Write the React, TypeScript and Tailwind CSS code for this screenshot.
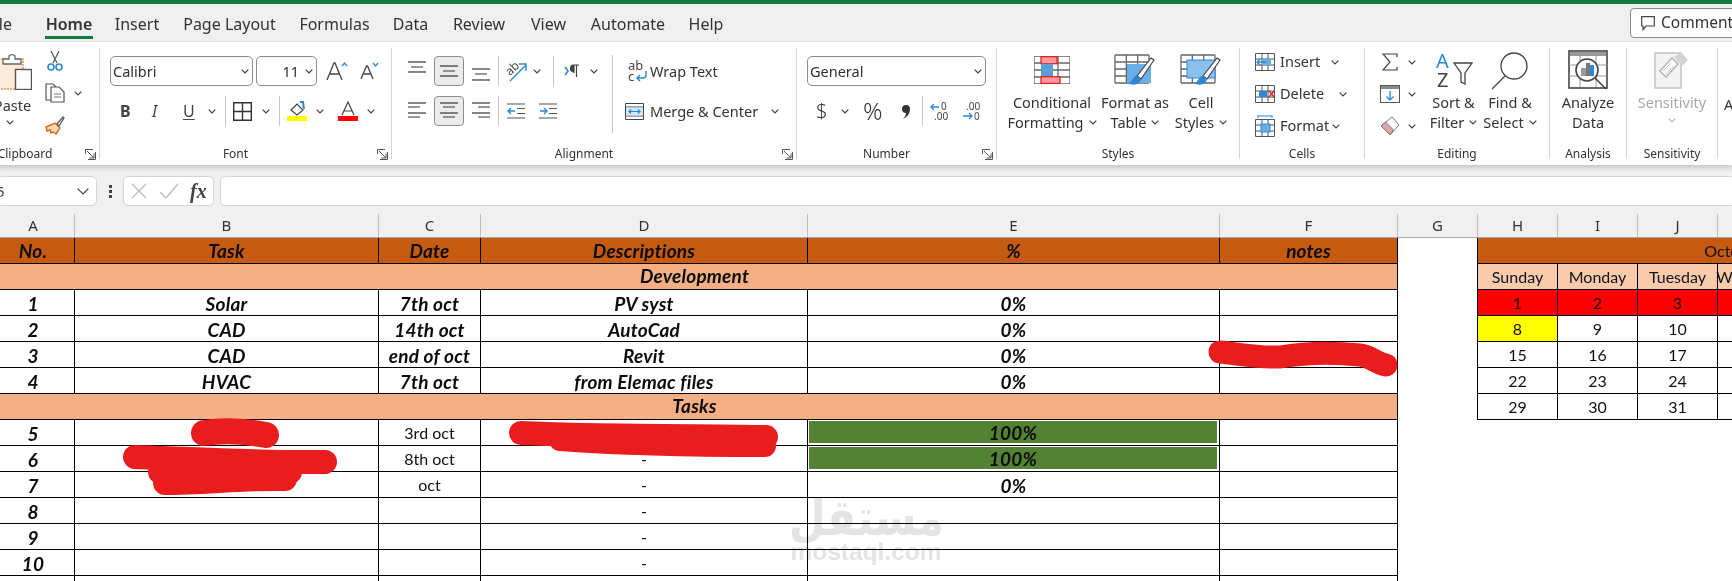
import type { ReactNode } from "react";

const ui = "font-['Noto_Sans',sans-serif]";
const cal = "font-['Lato','Liberation_Sans',sans-serif]";

function Chev({ className = "", gray = false }: { className?: string; gray?: boolean }) {
    return (
        <svg viewBox="0 0 8 5" className={"w-2 h-[5px] shrink-0 " + className}>
            <path d="M.7.7 4 4 7.3.7" fill="none" stroke={gray ? "#b5b5b5" : "#404040"} strokeWidth="1.2" />
        </svg>
    );
}

function Launcher() {
    return (
        <svg viewBox="0 0 11 11" className="w-[11px] h-[11px] shrink-0 ml-[6px] mr-[3px]">
            <path d="M.5 5V.5H8M2 2l7 7M9 4.5V9H4.5M10.5 3v7.5H3" fill="none" stroke="#555" strokeWidth="1" />
        </svg>
    );
}

function Sep({ className = "" }: { className?: string }) {
    return <div className={"w-px h-[30px] bg-[#c8c8c8] shrink-0 " + className} />;
}

function Group({ w, label, launcher, children, labelClass = "" }: { w: string; label: string; launcher?: boolean; children: ReactNode; labelClass?: string }) {
    return (
        <div className={"flex flex-col shrink-0 h-[111px] border-r border-[#d4d4d4] " + w}>
            <div className="flex-1 min-h-0">{children}</div>
            <div className="h-[14px] -mb-[2px] flex items-center">
                <span className={"flex-1 text-center text-[12px] leading-[14px] text-[#333] " + labelClass}>{label}</span>
                {launcher && <Launcher />}
            </div>
        </div>
    );
}

function Lines({ ys, spans }: { ys: number[]; spans: [number, number][] }) {
    return (
        <svg viewBox="0 0 18 30" className="w-[18px] h-[30px] shrink-0">
            {ys.map((y, i) => (
                <path key={i} d={`M${spans[i][0]} ${y}H${spans[i][1]}`} stroke={i % 2 ? "#555" : "#333"} strokeWidth="1.2" />
            ))}
        </svg>
    );
}

const full: [number, number][] = [[0, 18], [3, 15], [0, 18]];
const leftL: [number, number][] = [[0, 18], [0, 12], [0, 18], [0, 12]];
const centerL: [number, number][] = [[0, 18], [3, 15], [0, 18], [3, 15]];
const rightL: [number, number][] = [[0, 18], [6, 18], [0, 18], [6, 18]];

function PressedBtn({ children, className = "" }: { children: ReactNode; className?: string }) {
    return (
        <div className={"w-[30px] h-[30px] shrink-0 rounded-[4px] border border-[#8f8f8f] bg-[#ebebeb] flex items-center justify-center " + className}>
            {children}
        </div>
    );
}

function Combo({ w, text, right }: { w: string; text: string; right?: boolean }) {
    return (
        <div className={"h-[30px] rounded-[5px] border border-[#8a8a8a] flex items-center shrink-0 text-[14.5px] text-[#2f2f2f] " + w}>
            <span className={"flex-1 pt-px " + (right ? "text-right pr-[6px]" : "pl-[2px]")}>{text}</span>
            <Chev className="mr-[3px]" />
        </div>
    );
}

function Clipboard() {
    return (
        <Group w="w-[123px]" label="Clipboard" launcher labelClass="pr-[6px]">
            <div className="flex">
                <div className="ml-[11px] w-[44px] flex flex-col items-center pt-[4px] shrink-0">
                    <svg viewBox="0 0 44 38" className="w-[44px] h-[38px]">
                        <rect x="1" y="7" width="34" height="30" fill="#fdeadb" stroke="#e59a4f" strokeWidth="1.5" strokeDasharray="2 1" />
                        <path d="M21 7V4a4 4 0 0 1 6 0v3h6v5H15V7z" fill="#fff" stroke="#666" strokeWidth="1.3" />
                        <rect x="27.5" y="17.5" width="16" height="20" fill="#fff" stroke="#555" strokeWidth="1.4" />
                    </svg>
                    <span className="mt-[5px] ml-[5px] text-[14.5px] leading-[20px] text-[#333]">Paste</span>
                    <Chev className="mt-[5px]" />
                </div>
                <div className="ml-[13px] pt-[3px] flex flex-col gap-[12px]">
                    <svg viewBox="0 0 20 20" className="w-5 h-5">
                        <path d="M6 0l6 12M14 0 8 12" stroke="#555" strokeWidth="1.2" fill="none" />
                        <circle cx="6" cy="16" r="3" fill="none" stroke="#2b88d8" strokeWidth="1.6" />
                        <circle cx="14" cy="16" r="3" fill="none" stroke="#2b88d8" strokeWidth="1.6" />
                    </svg>
                    <div className="flex items-center">
                        <svg viewBox="0 0 20 20" className="w-5 h-5">
                            <path d="M6 17H1V1h7l3 3" fill="#fff" stroke="#555" strokeWidth="1.2" />
                            <path d="M6 4h8l5 5v10H6z" fill="#fff" stroke="#555" strokeWidth="1.2" />
                            <path d="M9 11h7M9 14h7" stroke="#777" strokeWidth="1" />
                        </svg>
                        <Chev className="ml-[9px]" />
                    </div>
                    <svg viewBox="0 0 20 20" className="w-5 h-5">
                        <path d="M1 12 10 8l5 5-4 6-3-2-2 1-1-3-3 1z" fill="#fbd5b5" stroke="#d9691e" strokeWidth="1.4" />
                        <path d="m12 9 6-7 1 1-5 8z" fill="#fff" stroke="#555" strokeWidth="1.2" />
                    </svg>
                </div>
            </div>
        </Group>
    );
}

function FontGroup() {
    return (
        <Group w="w-[292px]" label="Font" launcher>
            <div className="flex items-center mt-[8px] h-[30px]">
                <Combo w="ml-[10px] w-[143px]" text="Calibri" />
                <Combo w="ml-[3px] w-[61px]" text="11" right />
                <svg viewBox="0 0 22 20" className="ml-[9px] w-[22px] h-[20px] shrink-0">
                    <path d="M1 19 8 2h1l7 17M4 13h10" fill="none" stroke="#444" strokeWidth="1.3" />
                    <path d="m16 5 2.5-3L21 5" fill="none" stroke="#2b88d8" strokeWidth="1.3" />
                </svg>
                <svg viewBox="0 0 20 18" className="ml-[12px] w-[20px] h-[18px] shrink-0">
                    <path d="m1 17 5.500-13h1L13 17M3.500 12h8" fill="none" stroke="#444" strokeWidth="1.3" />
                    <path d="m13 1 2.500 3L18 1" fill="none" stroke="#2b88d8" strokeWidth="1.3" />
                </svg>
            </div>
            <div className="flex items-center mt-[10px] h-[30px]">
                <span className="ml-[20px] w-[11px] text-[16px] font-bold text-[#444] leading-none">B</span>
                <span className="ml-[21px] w-[10px] text-[16px] italic text-[#444] leading-none">I</span>
                <span className="ml-[21px] w-[11px] text-[16px] text-[#444] leading-none underline underline-offset-2">U</span>
                <Chev className="ml-[14px]" />
                <Sep className="ml-[9px]" />
                <svg viewBox="0 0 19 19" className="ml-[7px] w-[19px] h-[19px] shrink-0">
                    <path d="M.7.7h17.600v17.600H.7zM9.500.7v17.600M.7 9.500h17.600" fill="none" stroke="#333" strokeWidth="1.4" />
                </svg>
                <Chev className="ml-[10px]" />
                <Sep className="ml-[9px]" />
                <svg viewBox="0 0 20 20" className="ml-[7px] w-5 h-5 shrink-0">
                    <path d="M4 9 10 3l6 6-6 5z" fill="#fff" stroke="#444" strokeWidth="1.2" />
                    <path d="M13 1h3l1 7" fill="none" stroke="#2b88d8" strokeWidth="2" />
                    <rect x="0" y="15" width="20" height="5" fill="#ffff00" />
                </svg>
                <Chev className="ml-[9px]" />
                <svg viewBox="0 0 20 20" className="ml-[14px] w-5 h-5 shrink-0">
                    <path d="M4 14 10 1l6 13M6 10h8" fill="none" stroke="#444" strokeWidth="1.2" />
                    <rect x="0" y="15" width="20" height="5" fill="#ff0000" />
                </svg>
                <Chev className="ml-[9px]" />
            </div>
        </Group>
    );
}

function Alignment() {
    return (
        <Group w="w-[405px]" label="Alignment" launcher>
            <div className="flex">
                <div className="w-[220px] shrink-0 pt-[8px]">
                    <div className="flex items-center h-[30px]">
                        <div className="ml-[16px]"><Lines ys={[6, 11, 16]} spans={full} /></div>
                        <PressedBtn className="ml-[8px]"><Lines ys={[10, 15, 20]} spans={full} /></PressedBtn>
                        <div className="ml-[8px]"><Lines ys={[13, 18, 24]} spans={full} /></div>
                        <Sep className="ml-[8px]" />
                        <svg viewBox="0 0 22 22" className="ml-[7px] w-[22px] h-[22px] shrink-0">
                            <text x="0" y="13" transform="rotate(-45 6 10)" fontSize="12" fill="#444" fontFamily="Noto Sans">ab</text>
                            <path d="m4 21 16-16M13 4h7v7" fill="none" stroke="#2b88d8" strokeWidth="1.4" />
                        </svg>
                        <Chev className="ml-[5px]" />
                        <Sep className="ml-[12px]" />
                        <svg viewBox="0 0 16 14" className="ml-[10px] w-[16px] h-[14px] shrink-0">
                            <path d="m1 3 3 4-3 4" fill="none" stroke="#2b88d8" strokeWidth="1.6" />
                            <path d="M8 1h7M12.500 1v12M10 1v8M10 1a3 3 0 0 0 0 7" fill="#444" stroke="#444" strokeWidth="1.200" />
                        </svg>
                        <Chev className="ml-[10px]" />
                    </div>
                    <div className="flex items-center h-[30px] mt-[10px]">
                        <div className="ml-[16px]"><Lines ys={[7, 11, 17, 21]} spans={leftL} /></div>
                        <PressedBtn className="ml-[8px]"><Lines ys={[7, 11, 17, 21]} spans={centerL} /></PressedBtn>
                        <div className="ml-[8px]"><Lines ys={[7, 11, 17, 21]} spans={rightL} /></div>
                        <Sep className="ml-[8px]" />
                        <svg viewBox="0 0 18 16" className="ml-[8px] w-[18px] h-[16px] shrink-0">
                            <path d="M0 1h18M0 15h18M10 5.500h8M10 10.500h8" stroke="#555" strokeWidth="1.200" />
                            <path d="M8 8H1M4 5 1 8l3 3" fill="none" stroke="#2b88d8" strokeWidth="1.400" />
                        </svg>
                        <svg viewBox="0 0 18 16" className="ml-[14px] w-[18px] h-[16px] shrink-0">
                            <path d="M0 1h18M0 15h18M10 5.500h8M10 10.500h8" stroke="#555" strokeWidth="1.200" />
                            <path d="M1 8h7M5 5l3 3-3 3" fill="none" stroke="#2b88d8" strokeWidth="1.400" />
                        </svg>
                    </div>
                </div>
                <div className="w-px h-[78px] mt-[7px] bg-[#c8c8c8] shrink-0" />
                <div className="pt-[8px] text-[14.5px] text-[#333]">
                    <div className="flex items-center h-[30px]">
                        <svg viewBox="0 0 19 24" className="ml-[15px] w-[19px] h-[24px] shrink-0">
                            <text x="0" y="11" fontSize="13" fill="#444" fontFamily="Noto Sans">ab</text>
                            <text x="0" y="22" fontSize="13" fill="#444" fontFamily="Noto Sans">c</text>
                            <path d="M18 12v4a3 3 0 0 1-3 3H9M12 16l-3 3 3 3" fill="none" stroke="#2b88d8" strokeWidth="1.400" />
                        </svg>
                        <span className="ml-[3px] pt-px whitespace-nowrap">Wrap Text</span>
                    </div>
                    <div className="flex items-center h-[30px] mt-[10px]">
                        <svg viewBox="0 0 19 17" className="ml-[12px] w-[19px] h-[17px] shrink-0">
                            <path d="M.500.500h18v16H.500z" fill="#fff" stroke="#444" />
                            <path d="M.500 4h18M.500 13h18" stroke="#444" />
                            <rect x="1" y="4.500" width="17" height="8" fill="#cfe6f8" />
                            <path d="M4 8.500h11M6 6.500l-2 2 2 2M13 6.500l2 2-2 2" fill="none" stroke="#2b88d8" strokeWidth="1.200" />
                        </svg>
                        <span className="ml-[6px] pt-px w-[121px] whitespace-nowrap">Merge &amp; Center</span>
                        <Chev />
                    </div>
                </div>
            </div>
        </Group>
    );
}

function NumberGroup() {
    return (
        <Group w="w-[200px]" label="Number" launcher>
            <div className="flex items-center mt-[8px] h-[30px]">
                <Combo w="ml-[10px] w-[179px]" text="General" />
            </div>
            <div className="flex items-center mt-[10px] h-[30px]">
                <span className="ml-[19px] w-[11px] text-[20px] font-light leading-none text-[#333]">$</span>
                <Chev className="ml-[14px]" />
                <span className="ml-[14px] w-[19px] text-[24px] font-light leading-none text-[#333]">%</span>
                <svg viewBox="0 0 10 15" className="ml-[19px] w-[10px] h-[15px] shrink-0">
                    <path d="M1 5a4 4 0 1 1 8 0c0 5-3 8-7 10 2-2 3-4 3-6a4 4 0 0 1-4-4z" fill="#333" />
                </svg>
                <Sep className="ml-[11px]" />
                <svg viewBox="0 0 20 20" className="ml-[7px] w-5 h-5 shrink-0">
                    <path d="M1 6h8M4 3 1 6l3 3" fill="none" stroke="#2b88d8" strokeWidth="1.300" />
                    <text x="11" y="9" fontSize="10" fill="#444" fontFamily="Noto Sans">0</text>
                    <text x="4" y="19" fontSize="10" fill="#444" fontFamily="Noto Sans">.00</text>
                </svg>
                <svg viewBox="0 0 20 20" className="ml-[12px] w-5 h-5 shrink-0">
                    <text x="4" y="9" fontSize="10" fill="#444" fontFamily="Noto Sans">.00</text>
                    <path d="M1 15h9M7 12l3 3-3 3" fill="none" stroke="#2b88d8" strokeWidth="1.300" />
                    <text x="12" y="19" fontSize="10" fill="#444" fontFamily="Noto Sans">0</text>
                </svg>
            </div>
        </Group>
    );
}

function GridBase({ w = 36, h = 28, cols = 3, rows = 4 }: { w?: number; h?: number; cols?: number; rows?: number }) {
    const out: ReactNode[] = [];
    for (let i = 0; i <= cols; i++) out.push(<path key={"c" + i} d={`M${(i * w) / cols} 0V${h}`} stroke="#666" strokeWidth="1.300" />);
    for (let i = 0; i <= rows; i++) out.push(<path key={"r" + i} d={`M0 ${(i * h) / rows}H${w}`} stroke="#666" strokeWidth="1.300" />);
    return <>{out}</>;
}

function Brush({ x = 0, y = 0 }: { x?: number; y?: number }) {
    return (
        <g transform={`translate(${x} ${y})`}>
            <path d="m10 18 14-18 3 2-13 19z" fill="#fff" stroke="#444" strokeWidth="1.200" />
            <path d="M9 18c-4 1-3 6-8 7 5 3 12 2 13-4z" fill="#2b88d8" />
        </g>
    );
}

function BigBtn({ className, icon, l1, l2, gray }: { className: string; icon: ReactNode; l1: string; l2?: string; gray?: boolean }) {
    return (
        <div className={"flex flex-col items-center shrink-0 text-[14.5px] leading-[20px] whitespace-nowrap " + (gray ? "text-[#a8a8a8] " : "text-[#333] ") + className}>
            <div className="h-[44px] flex items-start justify-center">{icon}</div>
            <span>{l1}</span>
            <span className="flex items-center h-[20px]">
                {l2}
                <Chev gray={gray} className={l2 ? "ml-[5px]" : ""} />
            </span>
        </div>
    );
}

function Styles() {
    return (
        <Group w="w-[243px]" label="Styles">
            <div className="flex">
                <BigBtn
                    className="ml-[12px] w-[86px]"
                    l1="Conditional"
                    l2="Formatting"
                    icon={
                        <svg viewBox="0 0 36 28" className="w-[36px] h-[28px] mt-[8px]">
                            <GridBase />
                            <rect x="7" y=".7" width="16" height="7" fill="#ff9a9a" stroke="#e02020" strokeWidth="1.300" />
                            <rect x="7" y="7.700" width="12" height="13" fill="#5a9ed6" />
                            <rect x="7" y="20.700" width="19" height="6.800" fill="#ff9a9a" stroke="#e02020" strokeWidth="1.300" />
                        </svg>
                    }
                />
                <BigBtn
                    className="ml-[5px] w-[70px]"
                    l1="Format as"
                    l2="Table"
                    icon={
                        <svg viewBox="0 0 40 36" className="w-[40px] h-[36px] mt-[7px] overflow-visible">
                            <GridBase w={34} h={28} />
                            <rect x="12" y="9" width="24" height="19" fill="#6aaee6" />
                            <Brush x={12} y={3} />
                        </svg>
                    }
                />
                <BigBtn
                    className="ml-[2px] w-[58px]"
                    l1="Cell"
                    l2="Styles"
                    icon={
                        <svg viewBox="0 0 40 36" className="w-[40px] h-[36px] mt-[7px] overflow-visible">
                            <GridBase w={34} h={28} />
                            <rect x="6" y="5" width="28" height="18" fill="#8cc0ec" stroke="#2b88d8" />
                            <Brush x={12} y={3} />
                        </svg>
                    }
                />
            </div>
        </Group>
    );
}

function SmallGrid({ children }: { children: ReactNode }) {
    return (
        <svg viewBox="0 0 20 18" className="w-5 h-[18px] shrink-0 overflow-visible">
            <path d="M.500.500h19v17h-19zM.500 6h19M.500 12h19M7 .500v17M13 .500v17" fill="#fff" stroke="#555" strokeWidth="1" />
            {children}
        </svg>
    );
}

function Cells() {
    return (
        <Group w="w-[125px]" label="Cells">
            <div className="flex flex-col gap-[4px] text-[14.5px] text-[#333]">
                <div className="h-[28px] flex items-center pl-[15px]">
                    <SmallGrid>
                        <rect x="7" y="6" width="9" height="6" fill="#6aaee6" />
                        <path d="M11 9H2M5 6 2 9l3 3" fill="none" stroke="#2b88d8" strokeWidth="1.400" />
                    </SmallGrid>
                    <span className="ml-[5px] w-[51px]">Insert</span>
                    <Chev />
                </div>
                <div className="h-[28px] flex items-center pl-[15px]">
                    <SmallGrid>
                        <rect x="4" y="6" width="8" height="6" fill="#2b88d8" />
                        <path d="m14 6 5 6M19 6l-5 6" stroke="#e02020" strokeWidth="1.500" />
                    </SmallGrid>
                    <span className="ml-[5px] w-[59px]">Delete</span>
                    <Chev />
                </div>
                <div className="h-[28px] flex items-center pl-[15px]">
                    <svg viewBox="0 0 20 22" className="w-5 h-[22px] shrink-0">
                        <path d="M.500 4.500h19v17h-19zM.500 10h19M.500 16h19M7 4.500v17M13 4.500v17" fill="#fff" stroke="#555" strokeWidth="1" />
                        <rect x="6" y="9" width="9" height="8" fill="#6aaee6" stroke="#2b88d8" />
                        <path d="M3 1h14M3 0v3M17 0v3" stroke="#2b88d8" strokeWidth="1" />
                    </svg>
                    <span className="ml-[5px] w-[52px]">Format</span>
                    <Chev />
                </div>
            </div>
        </Group>
    );
}

function Editing() {
    return (
        <Group w="w-[185px]" label="Editing">
            <div className="flex">
                <div className="w-[60px] shrink-0 flex flex-col gap-[4px]">
                    <div className="h-[28px] flex items-center pl-[17px]">
                        <svg viewBox="0 0 16 18" className="w-4 h-[18px] shrink-0">
                            <path d="M15 4V1H1l7 8-7 8h14v-3" fill="none" stroke="#444" strokeWidth="1.200" />
                        </svg>
                        <Chev className="ml-[10px]" />
                    </div>
                    <div className="h-[28px] flex items-center pl-[15px]">
                        <svg viewBox="0 0 20 18" className="w-5 h-[18px] shrink-0">
                            <rect x=".5" y=".5" width="19" height="17" fill="#fff" stroke="#555" />
                            <rect x="1" y="1" width="18" height="3" fill="#888" />
                            <path d="M10 6v9M6.500 11.500 10 15l3.500-3.500" fill="none" stroke="#2b88d8" strokeWidth="1.400" />
                        </svg>
                        <Chev className="ml-[8px]" />
                    </div>
                    <div className="h-[28px] flex items-center pl-[15px]">
                        <svg viewBox="0 0 20 20" className="w-5 h-5 shrink-0">
                            <path d="M12 1l7 8-9 10-9-9z" fill="#fff" stroke="#777" />
                            <path d="m5.500 6 8 8-3.500 5-9-9z" fill="#d9a8a8" stroke="#777" />
                        </svg>
                        <Chev className="ml-[8px]" />
                    </div>
                </div>
                <BigBtn
                    className="w-[57px]"
                    l1="Sort &"
                    l2="Filter"
                    icon={
                        <svg viewBox="0 0 38 36" className="w-[38px] h-[36px] mt-[4px]">
                            <text x="1" y="16" fontSize="20" fill="#2b88d8" fontFamily="Noto Sans">A</text>
                            <text x="2" y="35" fontSize="20" fill="#444" fontFamily="Noto Sans">Z</text>
                            <path d="M19 11h18l-7 10v11l-4-2v-9z" fill="#fff" stroke="#444" strokeWidth="1.300" />
                        </svg>
                    }
                />
                <BigBtn
                    className="w-[56px]"
                    l1="Find &"
                    l2="Select"
                    icon={
                        <svg viewBox="0 0 38 38" className="w-[38px] h-[38px] mt-[4px]">
                            <circle cx="23" cy="14" r="13" fill="#fff" stroke="#444" strokeWidth="1.300" />
                            <path d="M14 24 1 37" stroke="#444" strokeWidth="1.300" />
                        </svg>
                    }
                />
            </div>
        </Group>
    );
}

function Analysis() {
    return (
        <Group w="w-[77px]" label="Analysis">
            <div className="flex justify-center">
                <div className="flex flex-col items-center text-[14.5px] leading-[20px] text-[#333]">
                    <div className="h-[44px]">
                        <svg viewBox="0 0 40 40" className="w-[40px] h-[40px] mt-[2px]">
                            <rect x="1" y="1" width="38" height="37" fill="#fff" stroke="#444" strokeWidth="1.600" />
                            <rect x="2" y="2" width="36" height="4" fill="#999" />
                            <path d="M1 15h38M1 26h38M12 6v31M28 6v31" stroke="#999" strokeWidth="1" />
                            <circle cx="19" cy="20" r="11" fill="#fff" stroke="#444" strokeWidth="1.600" />
                            <rect x="13" y="18" width="5" height="8" fill="#999" />
                            <rect x="18" y="13" width="4" height="13" fill="#777" />
                            <rect x="22" y="15" width="4" height="11" fill="#2b88d8" />
                            <path d="m27 28 11 11" stroke="#444" strokeWidth="1.600" />
                        </svg>
                    </div>
                    <span>Analyze</span>
                    <span>Data</span>
                </div>
            </div>
        </Group>
    );
}

function Sensitivity() {
    return (
        <Group w="w-[91px]" label="Sensitivity">
            <div className="flex justify-center">
                <div className="flex flex-col items-center text-[14.5px] leading-[20px] text-[#a8a8a8]">
                    <div className="h-[44px]">
                        <svg viewBox="0 0 36 38" className="w-[36px] h-[38px] mt-[3px]">
                            <rect x="1" y="2" width="26" height="35" fill="#f2f2f2" stroke="#c4c4c4" strokeWidth="1.500" />
                            <path d="m6 20 12-13 6 6-12 13z" fill="#fff" stroke="#b5b5b5" strokeWidth="1.500" />
                            <path d="m9 20 8-8M12 23l8-8" stroke="#c4c4c4" />
                            <path d="m20 6 7-5 7 8-6 6z" fill="#d4d4d4" />
                        </svg>
                    </div>
                    <span>Sensitivity</span>
                    <Chev gray className="mt-[6px]" />
                </div>
            </div>
        </Group>
    );
}

function Tabs() {
    const tabs: [string, string][] = [
        ["Insert", "w-[42px] ml-[23px]"],
        ["Page Layout", "w-[93px] ml-[25px]"],
        ["Formulas", "w-[69px] ml-[24px]"],
        ["Data", "w-[35px] ml-[24px]"],
        ["Review", "w-[52px] ml-[25px]"],
        ["View", "w-[37px] ml-[25px]"],
        ["Automate", "w-[76px] ml-[23px]"],
        ["Help", "w-[34px] ml-[23px]"],
    ];
    return (
        <div className="h-[37px] flex items-start text-[16px] text-[#333] whitespace-nowrap">
            <div className="w-[12px] h-[37px] pt-[3px] flex items-center justify-end overflow-hidden">
                <span>File</span>
            </div>
            <div className="ml-[33px] w-[48px] h-[35px] pt-[8px] border-b-[3px] border-[#107c41] flex items-center justify-center font-semibold">Home</div>
            {tabs.map(([t, c]) => (
                <div key={t} className={"h-[37px] pt-[3px] flex items-center justify-center " + c}>{t}</div>
            ))}
            <div className="ml-auto -mr-[18px] mt-[4px] w-[120px] h-[30px] shrink-0 rounded-[4px] border border-[#8a8a8a] bg-white flex items-center pl-[10px] text-[15.500px]">
                <svg viewBox="0 0 14 15" className="w-[14px] h-[15px] shrink-0">
                    <path d="M.7.7h12.600v9.300H5l-3 3.500V10H.7z" fill="none" stroke="#444" strokeWidth="1.200" />
                </svg>
                <span className="ml-[6px]">Comments</span>
            </div>
        </div>
    );
}

function FormulaBar() {
    return (
        <div className="h-[49px] pt-[11px] flex text-[#444] relative">
            <div className="-ml-[3px] w-[100px] h-[30px] shrink-0 bg-white border border-[#d4d4d4] rounded-[5px] flex items-center text-[15px]">
                <span className="ml-[-2px] flex-1">5</span>
                <svg viewBox="0 0 12 7" className="w-3 h-[7px] mr-[7px]">
                    <path d="m.7.7 5.300 5.300L11.300.7" fill="none" stroke="#444" strokeWidth="1.200" />
                </svg>
            </div>
            <div className="ml-[11px] w-[4px] h-[30px] flex flex-col items-center justify-center gap-[2px] shrink-0">
                <div className="w-[3px] h-[3px] bg-[#444]" />
                <div className="w-[3px] h-[3px] bg-[#444]" />
                <div className="w-[3px] h-[3px] bg-[#444]" />
            </div>
            <div className="ml-[11px] w-[91px] h-[30px] shrink-0 bg-white border border-[#d4d4d4] rounded-[5px] flex items-center">
                <svg viewBox="0 0 16 16" className="ml-[7px] w-4 h-4">
                    <path d="m1 1 14 14M15 1 1 15" stroke="#bdbdbd" strokeWidth="1.300" />
                </svg>
                <svg viewBox="0 0 20 16" className="ml-[12px] w-5 h-4">
                    <path d="m1 9 6 6L19 1" fill="none" stroke="#bdbdbd" strokeWidth="1.300" />
                </svg>
                <span className="ml-[11px] font-['Liberation_Serif',serif] italic font-bold text-[20px] leading-none text-[#444]">fx</span>
            </div>
            <div className="ml-[6px] flex-1 -mr-[4px] h-[30px] bg-white border border-[#d4d4d4] rounded-[5px]" />
        </div>
    );
}

const letters: [string, string][] = [
    ["A", "w-[83px]"],
    ["B", "w-[304px]"],
    ["C", "w-[102px]"],
    ["D", "w-[327px]"],
    ["E", "w-[412px]"],
    ["F", "w-[178px]"],
    ["G", "w-[80px]"],
    ["H", "w-[80px]"],
    ["I", "w-[80px]"],
    ["J", "w-[80px]"],
    ["K", "w-[80px]"],
];

function ColHeads() {
    return (
        <div className="-ml-[8px] h-[24px] flex border-b border-[#a6a6a6] text-[15px] text-[#333]">
            {letters.map(([l, w]) => (
                <div key={l} className={"h-full shrink-0 border-r border-[#bdbdbd] flex items-center justify-center " + w}>{l}</div>
            ))}
        </div>
    );
}

const bi = "font-bold italic text-[19px] tracking-[0.2px] text-[#0c0c0c]";
const plain = "text-[16px] text-[#111]";
const cell = "h-[26px] border-r border-b border-black flex items-center justify-center whitespace-nowrap leading-none";
const tableCols = "grid grid-cols-[83px_304px_102px_327px_412px_178px]";

function Row({ v }: { v: string[] }) {
    return (
        <div className={tableCols}>
            {v.map((t, i) => (
                <div key={i} className={cell + " pt-px " + bi}>{t}</div>
            ))}
        </div>
    );
}

function GreenRow({ no, date }: { no: string; date: string }) {
    return (
        <div className={tableCols}>
            <div className={cell + " pt-px " + bi}>{no}</div>
            <div className={cell} />
            <div className={cell + " " + plain}>{date}</div>
            <div className={cell + " " + plain}>-</div>
            <div className={cell + " pt-px pl-px pr-[2px] pb-[2px] items-stretch"}>
                <div className={"w-full bg-[#548235] flex items-center justify-center " + bi}>100%</div>
            </div>
            <div className={cell} />
        </div>
    );
}

function Section({ t }: { t: string }) {
    return <div className={cell + " w-[1406px] bg-[#f4b084] pb-[2px] " + bi}>{t}</div>;
}

function MainTable() {
    return (
        <div className={"w-[1406px] shrink-0 " + cal}>
            <div className={tableCols + " bg-[#c55a11]"}>
                {["No.", "Task", "Date", "Descriptions", "%", "notes"].map((t) => (
                    <div key={t} className={cell + " " + bi}>{t}</div>
                ))}
            </div>
            <Section t="Development" />
            <Row v={["1", "Solar", "7th oct", "PV syst", "0%", ""]} />
            <Row v={["2", "CAD", "14th oct", "AutoCad", "0%", ""]} />
            <Row v={["3", "CAD", "end of oct", "Revit", "0%", ""]} />
            <Row v={["4", "HVAC", "7th oct", "from Elemac files", "0%", ""]} />
            <Section t="Tasks" />
            <GreenRow no="5" date="3rd oct" />
            <GreenRow no="6" date="8th oct" />
            <div className={tableCols}>
                <div className={cell + " pt-px " + bi}>7</div>
                <div className={cell} />
                <div className={cell + " " + plain}>oct</div>
                <div className={cell + " " + plain}>-</div>
                <div className={cell + " pt-px " + bi}>0%</div>
                <div className={cell} />
            </div>
            {["8", "9", "10"].map((n) => (
                <div key={n} className={tableCols}>
                    <div className={cell + " pt-px " + bi}>{n}</div>
                    <div className={cell} />
                    <div className={cell} />
                    <div className={cell + " " + plain}>-</div>
                    <div className={cell} />
                    <div className={cell} />
                </div>
            ))}
            <Row v={["", "", "", "", "", ""]} />
        </div>
    );
}

const calCell = "w-[80px] h-[26px] shrink-0 border-r border-b border-black flex items-center justify-center text-[16px] text-[#111] whitespace-nowrap leading-none";

function Calendar() {
    const days = ["Sunday", "Monday", "Tuesday", "Wednesday"];
    const weeks = [["1", "2", "3", "4"], ["8", "9", "10", "11"], ["15", "16", "17", "18"], ["22", "23", "24", "25"], ["29", "30", "31", ""]];
    return (
        <div className={"ml-[79px] shrink-0 border-l border-black self-start " + cal}>
            <div className="w-[511px] h-[26px] bg-[#c55a11] border-b border-black flex items-center justify-center text-[16px] text-[#111]">October</div>
            <div className="flex">
                {days.map((d) => (
                    <div key={d} className={calCell + " bg-[#f8cbad]"}>{d}</div>
                ))}
            </div>
            {weeks.map((w, i) => (
                <div key={i} className="flex">
                    {w.map((d, j) => (
                        <div key={j} className={calCell + " " + (i === 0 ? "bg-[#ff0000]" : i === 1 && j === 0 ? "bg-[#ffff00]" : "")}>{d}</div>
                    ))}
                </div>
            ))}
        </div>
    );
}

export default function App() {
    return (
        <div className={"relative w-[1732px] h-[581px] overflow-hidden bg-white " + ui}>
            <div className="h-[4px] bg-[#107c41]" />
            <div className="bg-[#f0f0f0]">
                <Tabs />
                <div className="h-[124px] pt-[6px] bg-white border-t border-[#e4e4e4] shadow-[0_3px_5px_rgba(0,0,0,0.18)] relative flex -ml-[23px] w-[1755px]">
                    <Clipboard />
                    <FontGroup />
                    <Alignment />
                    <NumberGroup />
                    <Styles />
                    <Cells />
                    <Editing />
                    <Analysis />
                    <Sensitivity />
                    <span className="ml-[6px] mt-[46px] text-[14.5px] text-[#333]">A</span>
                </div>
                <FormulaBar />
                <ColHeads />
            </div>
            <div className="-ml-[8px] flex">
                <MainTable />
                <Calendar />
            </div>
            {/* watermark */}
            <div className="absolute left-[786px] top-[498px] w-[160px] flex flex-col items-center text-[#e4e4e4] mix-blend-multiply pointer-events-none">
                <span dir="rtl" className="font-['DejaVu_Sans',sans-serif] font-bold text-[50px] leading-[41px] scale-x-[0.85] whitespace-nowrap">مستقل</span>
                <span className="font-['Liberation_Sans',sans-serif] font-bold text-[24.500px] leading-[26px] whitespace-nowrap">mostaql.com</span>
            </div>
            {/* red marker over the hidden text */}
            <svg viewBox="0 0 1732 581" className="absolute inset-0 w-[1732px] h-[581px] pointer-events-none">
                <g fill="none" stroke="#e81e1e" strokeLinecap="round" strokeLinejoin="round">
                    <path d="M204 433c20-3 45-1 62 2" strokeWidth="26" />
                    <path d="M135 457c60 2 130 6 190 5" strokeWidth="24" />
                    <path d="M160 462h140M160 472h130" strokeWidth="24" />
                    <path d="M165 483c40 0 80-5 120-4" strokeWidth="24" />
                    <path d="M521 433c80 4 150 2 245 4" strokeWidth="24" />
                    <path d="M560 440c70 5 130 6 205 6" strokeWidth="22" />
                    <path d="M1220 352c20 2 40 6 60 5 30-5 60-4 80-2 10 1 16 8 26 10" strokeWidth="23" />
                </g>
            </svg>
        </div>
    );
}
